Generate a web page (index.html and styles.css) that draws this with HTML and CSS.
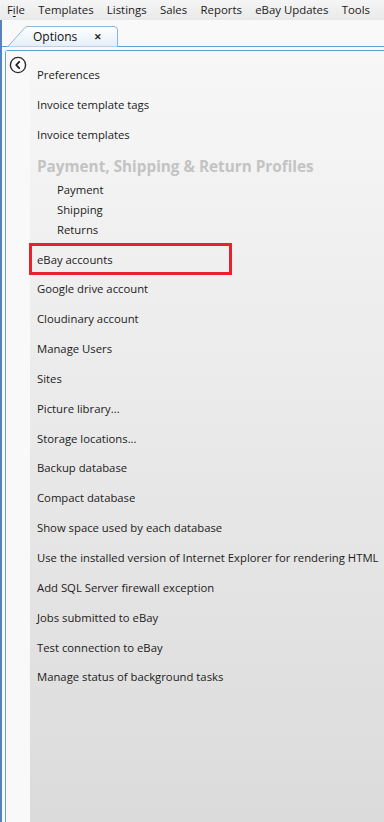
FILE: index.html
```html
<!DOCTYPE html>
<html>
<head>
<meta charset="utf-8">
<link rel="stylesheet" href="styles.css">
</head>
<body>
<div class="menubar">
  <span class="menu">F<u>i</u>le</span>
  <span class="menu">Templates</span>
  <span class="menu">Listings</span>
  <span class="menu">Sales</span>
  <span class="menu">Reports</span>
  <span class="menu">eBay Updates</span>
  <span class="menu">Tools</span>
</div>
<div class="window">
  <div class="tabstrip">
    <div class="tab">
      <svg class="tabshape" width="112" height="21" viewBox="0 0 112 21">
        <defs>
          <linearGradient id="tg" x1="0" y1="0" x2="0" y2="1">
            <stop offset="0" stop-color="#ffffff"/>
            <stop offset="1" stop-color="#e4eef9"/>
          </linearGradient>
        </defs>
        <path d="M0.5 21 L18 1.5 Q19 0.5 21 0.5 L107 0.5 Q110.5 0.5 110.5 4 L110.5 21 Z" fill="url(#tg)" stroke="#8db5dc" stroke-width="1"/>
      </svg>
      <span class="tablabel">Options</span>
      <span class="tabclose">✕</span>
    </div>
  </div>
  <div class="panel">
    <div class="sidecol">
      <svg class="back" width="18" height="18" viewBox="0 0 18 18">
        <circle cx="9" cy="9" r="7.6" fill="#ffffff" stroke="#2b2b2b" stroke-width="1.4"/>
        <path d="M10.2 5.8 L7.2 9 L10.2 12.2" fill="none" stroke="#1a1a1a" stroke-width="1.8" stroke-linecap="round" stroke-linejoin="round"/>
      </svg>
    </div>
    <div class="maincol">
      <div class="item">Preferences</div>
      <div class="item">Invoice template tags</div>
      <div class="item">Invoice templates</div>
      <div class="heading">Payment, Shipping &amp; Return Profiles</div>
      <div class="sub">Payment</div>
      <div class="sub">Shipping</div>
      <div class="sub">Returns</div>
      <div class="item highlighted">eBay accounts</div>
      <div class="item tight">Google drive account</div>
      <div class="item tight">Cloudinary account</div>
      <div class="item tight">Manage Users</div>
      <div class="item tight">Sites</div>
      <div class="item tight">Picture library...</div>
      <div class="item tight">Storage locations...</div>
      <div class="item tight">Backup database</div>
      <div class="item tight">Compact database</div>
      <div class="item tight">Show space used by each database</div>
      <div class="item tight">Use the installed version of Internet Explorer for rendering HTML</div>
      <div class="item tight">Add SQL Server firewall exception</div>
      <div class="item tight">Jobs submitted to eBay</div>
      <div class="item tight">Test connection to eBay</div>
      <div class="item tight">Manage status of background tasks</div>
    </div>
  </div>
</div>
</body>
</html>
```

FILE: styles.css
```css
* { box-sizing: border-box; }
html, body {
  margin: 0;
  padding: 0;
  width: 384px;
  height: 822px;
  overflow: hidden;
}
body {
  font-family: "Open Sans", "Noto Sans", sans-serif;
  font-size: 11.3px;
  color: #1b1b1b;
  background: #f9f9f9;
  display: flex;
  flex-direction: column;
}
.menubar {
  height: 20px;
  display: flex;
  align-items: center;
  padding-left: 0.3px;
  background: linear-gradient(#f5f5f5, #e9e9e9);
  white-space: nowrap;
  flex: none;
}
.menu {
  padding: 0 6.65px;
  line-height: 20px;
  font-size: 11.4px;
}
.menu u { text-decoration: underline; text-underline-offset: 2px; }
.window {
  flex: 1;
  display: flex;
  flex-direction: column;
  border-left: 2px solid #5781bc;
  background: #f9f9f9;
  min-height: 0;
}
.tabstrip {
  height: 27px;
  flex: none;
  border-bottom: 1px solid #5d9fd1;
  display: flex;
  align-items: flex-end;
  padding-left: 5px;
}
.tab {
  position: relative;
  width: 112px;
  height: 21px;
  margin-bottom: -1px;
  display: flex;
  align-items: center;
}
.tabshape {
  position: absolute;
  left: 0;
  top: 0;
}
.tablabel {
  position: relative;
  margin-left: 26px;
  font-size: 12px;
  color: #111;
}
.tabclose {
  position: relative;
  margin-left: 17px;
  font-size: 9px;
  font-weight: bold;
  color: #222;
}
.panel {
  flex: 1;
  margin-top: 3px;
  margin-left: 3px;
  border-top: 1px solid #5d9fd1;
  border-left: 1px solid #6aa3d3;
  border-top-left-radius: 3px;
  display: flex;
  min-height: 0;
}
.sidecol {
  width: 24px;
  flex: none;
  background: #f9f9f9;
  padding-top: 5px;
  padding-left: 3px;
}
.back { display: block; }
.maincol {
  flex: 1;
  background: linear-gradient(#f7f7f7, #dcdbdb);
  padding-top: 8px;
  white-space: nowrap;
}
.item {
  height: 30px;
  display: flex;
  align-items: center;
  padding-left: 7px;
}
.item.tight { height: 29.85px; }
.heading {
  height: 30px;
  display: flex;
  align-items: center;
  padding-left: 7px;
  padding-top: 4px;
  font-size: 15.3px;
  font-weight: bold;
  color: #c3c3c3;
}
.sub {
  height: 20px;
  display: flex;
  align-items: center;
  padding-left: 27px;
}
.item.highlighted {
  margin-top: 4px;
  margin-bottom: -1px;
  margin-left: -1px;
  width: 203px;
  height: 32px;
  border: 3px solid #e8212b;
  padding-left: 5px;
}
```
